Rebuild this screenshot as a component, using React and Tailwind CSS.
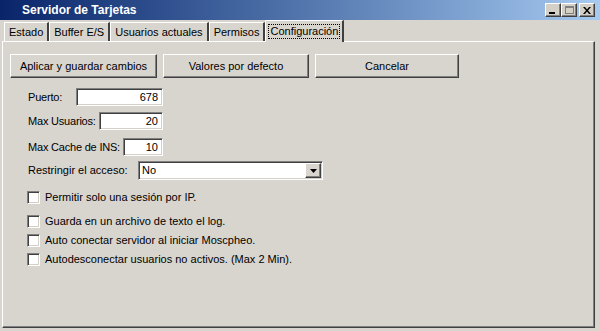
import React from 'react';

const font = { fontFamily: '"Liberation Sans", Arial, sans-serif' };

// classic raised 3d edge
const raised =
  'border border-t-white border-l-white border-b-[#404040] border-r-[#404040] shadow-[inset_-1px_-1px_0_#808080]';
// classic sunken edge
const sunken =
  'border border-t-[#808080] border-l-[#808080] border-b-white border-r-white shadow-[inset_1px_1px_0_#404040,inset_-1px_-1px_0_#d4d0c8]';

function TitleButton({ children }) {
  return (
    <div className={`w-4 h-[14px] bg-[#d4d0c8] ${raised} flex items-center justify-center`}>
      {children}
    </div>
  );
}

function Tab({ label, active }) {
  if (active) {
    return (
      <div className="h-[22px] -mb-px relative z-10 bg-[#d8d5cf] border-t border-l border-t-white border-l-white border-r-2 border-r-[#404040] px-[3px] flex items-center rounded-tl-[2px]">
        <span className="px-[1px] leading-[13px] outline outline-1 outline-dotted outline-black text-[11px]">
          Configuración
        </span>
      </div>
    );
  }
  return (
    <div className="h-[19px] mt-[2px] bg-[#d8d5cf] border-t border-l border-t-white border-l-white border-r-2 border-r-[#404040] px-[4px] flex items-center text-[11px] whitespace-nowrap">
      {label}
    </div>
  );
}

function Button({ label, w }) {
  return (
    <div
      className={`h-6 bg-[#d8d5cf] ${raised} flex items-center justify-center text-[11px]`}
      style={{ width: w }}
    >
      {label}
    </div>
  );
}

function Field({ label, value, inputW, mt }) {
  return (
    <div className={`flex items-center ${mt}`}>
      <span className="text-[11px] leading-[13px] tracking-[-0.2px] whitespace-nowrap flex-1">{label}</span>
      <div
        className={`h-[18px] bg-white ${sunken} flex items-center justify-end pr-[4px] text-[11px]`}
        style={{ width: inputW }}
      >
        {value}
      </div>
    </div>
  );
}

function Check({ label, mt }) {
  return (
    <div className={`flex items-center leading-[13px] ${mt}`}>
      <div className={`ml-[17px] w-[13px] h-[13px] bg-white ${sunken}`} />
      <span className="ml-[5px] text-[11px] whitespace-nowrap">{label}</span>
    </div>
  );
}

export default function App() {
  return (
    <div className="w-[600px] h-[331px] bg-[#d8d5cf] text-black flex flex-col overflow-hidden" style={font}>
      {/* title bar */}
      <div className="h-[20px] shrink-0 bg-gradient-to-r from-[#0a246a] to-[#a6caf0] flex items-center pl-[22px] pr-[5px]">
        <span className="text-white font-bold text-[12px] flex-1">Servidor de Tarjetas</span>
        <div className="flex items-center">
          <TitleButton>
            <div className="w-[6px] h-[2px] bg-black mt-[6px] -ml-[2px]" />
          </TitleButton>
          <TitleButton>
            <div className="w-[9px] h-[8px] border border-t-2 border-[#808080]" />
          </TitleButton>
          <div className="w-[2px]" />
          <TitleButton>
            <svg width="8" height="7" viewBox="0 0 8 7">
              <path d="M0 0h2l2 2.5L6 0h2L5 3.5 8 7H6L4 4.5 2 7H0l3-3.5z" fill="#000" />
            </svg>
          </TitleButton>
        </div>
      </div>

      {/* tabs */}
      <div className="flex items-end pl-[4px] h-[21px] shrink-0">
        <Tab label="Estado" />
        <Tab label="Buffer E/S" />
        <Tab label="Usuarios actuales" />
        <Tab label="Permisos" />
        <Tab label="Configuración" active />
      </div>

      {/* panel */}
      <div className="mx-[2px] mr-[5px] h-[287px] border border-t-white border-l-white border-b-[#404040] border-r-[#404040] shadow-[inset_-1px_-1px_0_#808080] pt-[12px] pl-[7px]">
        <div className="flex gap-[6px]">
          <Button label="Aplicar y guardar cambios" w={147} />
          <Button label="Valores por defecto" w={146} />
          <Button label="Cancelar" w={144} />
        </div>

        <div className="w-[135px] ml-[18px]">
          <Field label="Puerto:" value="678" inputW={87} mt="mt-[10px]" />
          <Field label="Max Usuarios:" value="20" inputW={64} mt="mt-[6px]" />
          <Field label="Max Cache de INS:" value="10" inputW={40} mt="mt-[8px]" />
        </div>

        <div className="flex items-center mt-[5px] ml-[18px]">
          <span className="text-[11px] leading-[13px] whitespace-nowrap w-[110px]">Restringir el acceso:</span>
          <div className={`w-[185px] h-[19px] bg-white ${sunken} flex items-center pl-[3px] text-[11px]`}>
            <span className="flex-1">No</span>
            <div className={`w-[16px] h-[15px] mr-[1px] bg-[#d8d5cf] ${raised} flex items-center justify-center`}>
              <svg width="7" height="4" viewBox="0 0 7 4">
                <path d="M0 0h7L3.5 4z" fill="#000" />
              </svg>
            </div>
          </div>
        </div>

        <Check label="Permitir solo una sesión por IP." mt="mt-[11px]" />
        <Check label="Guarda en un archivo de texto el log." mt="mt-[11px]" />
        <Check label="Auto conectar servidor al iniciar Moscpheo." mt="mt-[6px]" />
        <Check label="Autodesconectar usuarios no activos. (Max 2 Min)." mt="mt-[6px]" />
      </div>
    </div>
  );
}
